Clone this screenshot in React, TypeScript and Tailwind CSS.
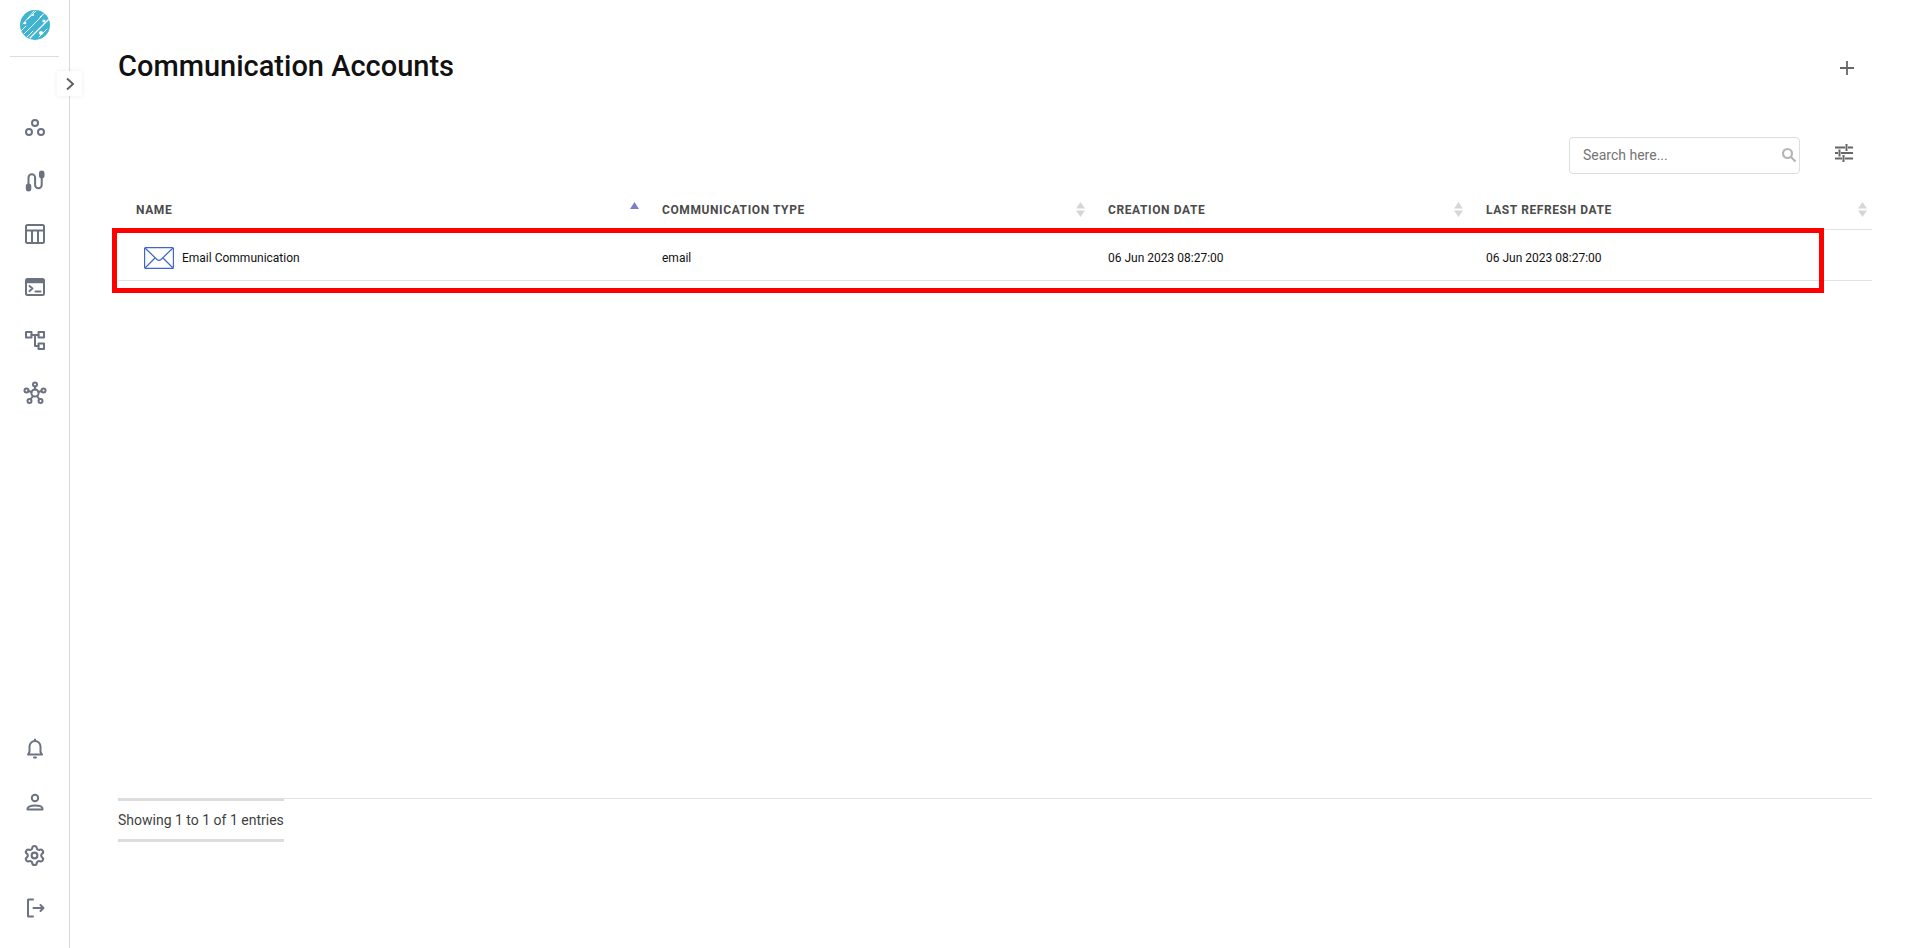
import React from "react";
import { Settings } from "lucide-react";

const S = "#6b7280";

function Ic({ children, w = 24, h = 24 }: { children: React.ReactNode; w?: number; h?: number }) {
  return (
    <svg width={w} height={h} viewBox={`0 0 ${w} ${h}`} fill="none" stroke={S} strokeWidth="2" strokeLinecap="round" strokeLinejoin="round">
      {children}
    </svg>
  );
}

const Logo = () => (
  <svg width="30" height="30" viewBox="0 0 30 30">
    <defs>
      <clipPath id="lg"><circle cx="15" cy="15" r="15" /></clipPath>
    </defs>
    <circle cx="15" cy="15" r="15" fill="#3fb3cf" />
    <g clipPath="url(#lg)" stroke="#fff" strokeWidth="0.9" strokeLinecap="round">
      <path d="M3 14 L14 1" />
      <path d="M8 9 L16 1" />
      <path d="M4 24 L22 6" />
      <path d="M10 28 L29 9" strokeWidth="1.2" />
      <path d="M19 27 L27 19" />
      <path d="M20 7 L26 2" />
      <path d="M1 21 L6 16" />
      <path d="M7 27 L13 21" />
    </g>
    <circle cx="21" cy="23" r="2" fill="#fff" />
    <circle cx="24" cy="11" r="1.6" fill="#fff" />
    <circle cx="5" cy="13" r="1.3" fill="#fff" />
    <circle cx="13" cy="5" r="1" fill="#fff" />
  </svg>
);

const navTop = [
  <Ic key="a"><circle cx="12" cy="7" r="3" /><circle cx="6" cy="16" r="3" /><circle cx="18" cy="16" r="3" /></Ic>,
  <Ic key="b">
    <path d="M5.500 17V8.500a3.300 3.300 0 0 1 6.600 0v7.500a3.300 3.300 0 0 0 6.600 0V8" />
    <rect x="3.800" y="15.500" width="3.500" height="6" rx="1.700" fill={S} />
    <rect x="17" y="2.500" width="3.500" height="6" rx="1.700" fill={S} />
  </Ic>,
  <Ic key="c"><rect x="3" y="3" width="18" height="18" rx="1.500" /><path d="M3 8.500h18M9 8.500V21M15 8.500V21" /></Ic>,
  <Ic key="d"><rect x="3" y="4" width="18" height="16" rx="1.500" /><path d="M3 6.500h18" strokeWidth="3.500" strokeLinecap="butt" /><path d="M6.500 11l3 2.500-3 2.500M12.500 16.500h5" /></Ic>,
  <Ic key="e"><rect x="3" y="4" width="5.500" height="5.500" strokeLinecap="butt" /><rect x="15.500" y="4" width="5.500" height="5.500" /><rect x="15.500" y="15.500" width="5.500" height="5.500" /><path d="M8.500 7h7M12 7v11h3.500" /></Ic>,
  <Ic key="f">
    <circle cx="12" cy="12" r="3.600" /><circle cx="12" cy="3.500" r="2" /><circle cx="3.500" cy="9.500" r="2" /><circle cx="20.500" cy="9.500" r="2" /><circle cx="6.500" cy="20" r="2" /><circle cx="17.500" cy="20" r="2" />
    <path d="M12 5.500v3M5.400 10l3.200 1M18.600 10l-3.200 1M7.700 18.300l2.200-3.300M16.300 18.300l-2.200-3.300" />
  </Ic>,
];

const navBottom = [
  <Ic key="a"><path d="M12 4a5.500 5.500 0 0 0-5.500 5.500V15L5 17.500h14L17.500 15V9.500A5.500 5.500 0 0 0 12 4z" /><path d="M12 2.500V4M11 20.500h2" /></Ic>,
  <Ic key="b"><circle cx="12" cy="8" r="3.200" /><path d="M4.500 19.500v-.7c0-2 3.200-3.300 7.500-3.300s7.500 1.300 7.500 3.300v.7z" /></Ic>,
  <div key="c" className="flex h-[24px] w-[24px] items-center justify-center"><Settings size={23} color={S} strokeWidth={2.200} /></div>,
  <Ic key="d"><path d="M10 3.500H5.500a.5.5 0 0 0-.5.500v16a.5.5 0 0 0 .5.500H10" /><path d="M10.500 12h10M17.500 9l3 3-3 3" /></Ic>,
];

const SortIcon = () => (
  <svg width="9" height="15" viewBox="0 0 9 15" className="shrink-0">
    <path d="M4.500 0 L9 6.500 H0 Z" fill="#d6d6d6" />
    <path d="M4.500 15 L9 8.500 H0 Z" fill="#d6d6d6" />
  </svg>
);

const cols = [
  { name: "NAME", w: "w-[526px]" },
  { name: "COMMUNICATION TYPE", w: "w-[446px]" },
  { name: "CREATION DATE", w: "w-[378px]" },
  { name: "LAST REFRESH DATE", w: "flex-1" },
];

export default function App() {
  return (
    <div className="relative flex h-[948px] w-full overflow-hidden bg-white font-['Roboto',sans-serif]">
      <aside className="relative flex w-[70px] shrink-0 flex-col border-r border-[#d9d9d9] pb-[28px]">
        <div className="flex h-[57px] flex-col items-center">
          <div className="mt-[10px]"><Logo /></div>
          <div className="mt-auto h-px w-[49px] bg-[#dcdcdc]" />
        </div>
        <div className="mt-[59px] flex flex-col items-center gap-[29px]">{navTop}</div>
        <div className="mt-auto flex flex-col items-center gap-[29px]">{navBottom}</div>
        <div className="absolute left-[57px] top-[71px] flex h-[25px] w-[25px] items-center justify-center bg-white shadow-[0_0_5px_rgba(0,0,0,0.07)]">
          <svg width="10" height="14" viewBox="0 0 10 14" fill="none" stroke="#5f6368" strokeWidth="2"><path d="M2 1.500 L8 7 L2 12.500" /></svg>
        </div>
      </aside>

      <main className="flex min-w-0 flex-1 flex-col pl-[48px] pr-[48px]">
        <div className="flex h-[135px] items-start justify-between">
          <h1 className="mt-[49px] text-[29px] font-medium leading-[35px] text-[#111]">Communication Accounts</h1>
          <svg className="mr-[16px] mt-[59px]" width="18" height="18" viewBox="0 0 18 18" stroke="#666" strokeWidth="1.800"><path d="M9 2v14M2 9h14" /></svg>
        </div>

        <div className="flex h-[40px] items-center justify-end">
          <div className="flex h-[37px] w-[231px] items-center justify-between rounded-[4px] border border-[#ddd] pl-[13px] pr-[2px]">
            <span className="text-[14px] text-[#757575]">Search here...</span>
            <svg width="16" height="16" viewBox="0 0 16 16" fill="none" stroke="#b5b5b5" strokeWidth="2.200"><circle cx="6.500" cy="6.500" r="4.500" /><path d="M10 10l4.500 4.500" /></svg>
          </div>
          <svg className="mb-[4px] ml-[35px] mr-[19px]" width="18" height="18" viewBox="0 0 18 18" fill="none" stroke="#666" strokeWidth="2">
            <path d="M0 3.500h10M13 3.500h5M11.500 0v7M0 9h3M6 9h12M4.500 5.500v7M0 14.500h7M10 14.500h8M8.500 11v7" />
          </svg>
        </div>

        <div className="mt-[15px] flex h-[40px] items-center border-b border-[#e2e2e2]">
          {cols.map((c, i) => (
            <div key={c.name} className={`flex items-center justify-between pl-[18px] pr-[5px] ${c.w}`}>
              <span className="text-[12px] font-bold tracking-[0.6px] text-[#4b4b4b]">{c.name}</span>
              {i === 0 ? (
                <svg className="mb-[9px]" width="9" height="7" viewBox="0 0 9 7"><path d="M4.500 0L9 7H0Z" fill="#7b7fc9" /></svg>
              ) : (
                <SortIcon />
              )}
            </div>
          ))}
        </div>

        <div className="flex h-[51px] items-center border-b border-[#e2e2e2] pt-[6px] text-[12px] text-[#111]">
          <div className="flex w-[526px] items-center pl-[26px]">
            <svg width="30" height="22" viewBox="0 0 30 22" fill="none" stroke="#3f66c9" strokeWidth="1.200">
              <rect x="0.600" y="0.600" width="28.800" height="20.800" rx="1" />
              <path d="M1 1l12 11.500c1.200 1 2.800 1 4 0L29 1M1 21l10.500-10.500M29 21L18.500 10.500" />
            </svg>
            <span className="ml-[8px]">Email Communication</span>
          </div>
          <div className="w-[446px] pl-[18px]">email</div>
          <div className="w-[378px] pl-[18px]">06 Jun 2023 08:27:00</div>
          <div className="flex-1 pl-[18px]">06 Jun 2023 08:27:00</div>
        </div>

        <div className="mt-[517px] border-t border-[#e2e2e2]">
          <div className="-mt-px flex h-[44px] w-[166px] items-center border-y-[3px] border-[#dcdcdc] text-[14px] whitespace-nowrap text-[#3f3f3f]">
            Showing 1 to 1 of 1 entries
          </div>
        </div>
      </main>

      <div className="pointer-events-none absolute left-[112px] top-[228px] h-[65px] w-[1712px] border-[5px] border-[#ff0000]" />
    </div>
  );
}
